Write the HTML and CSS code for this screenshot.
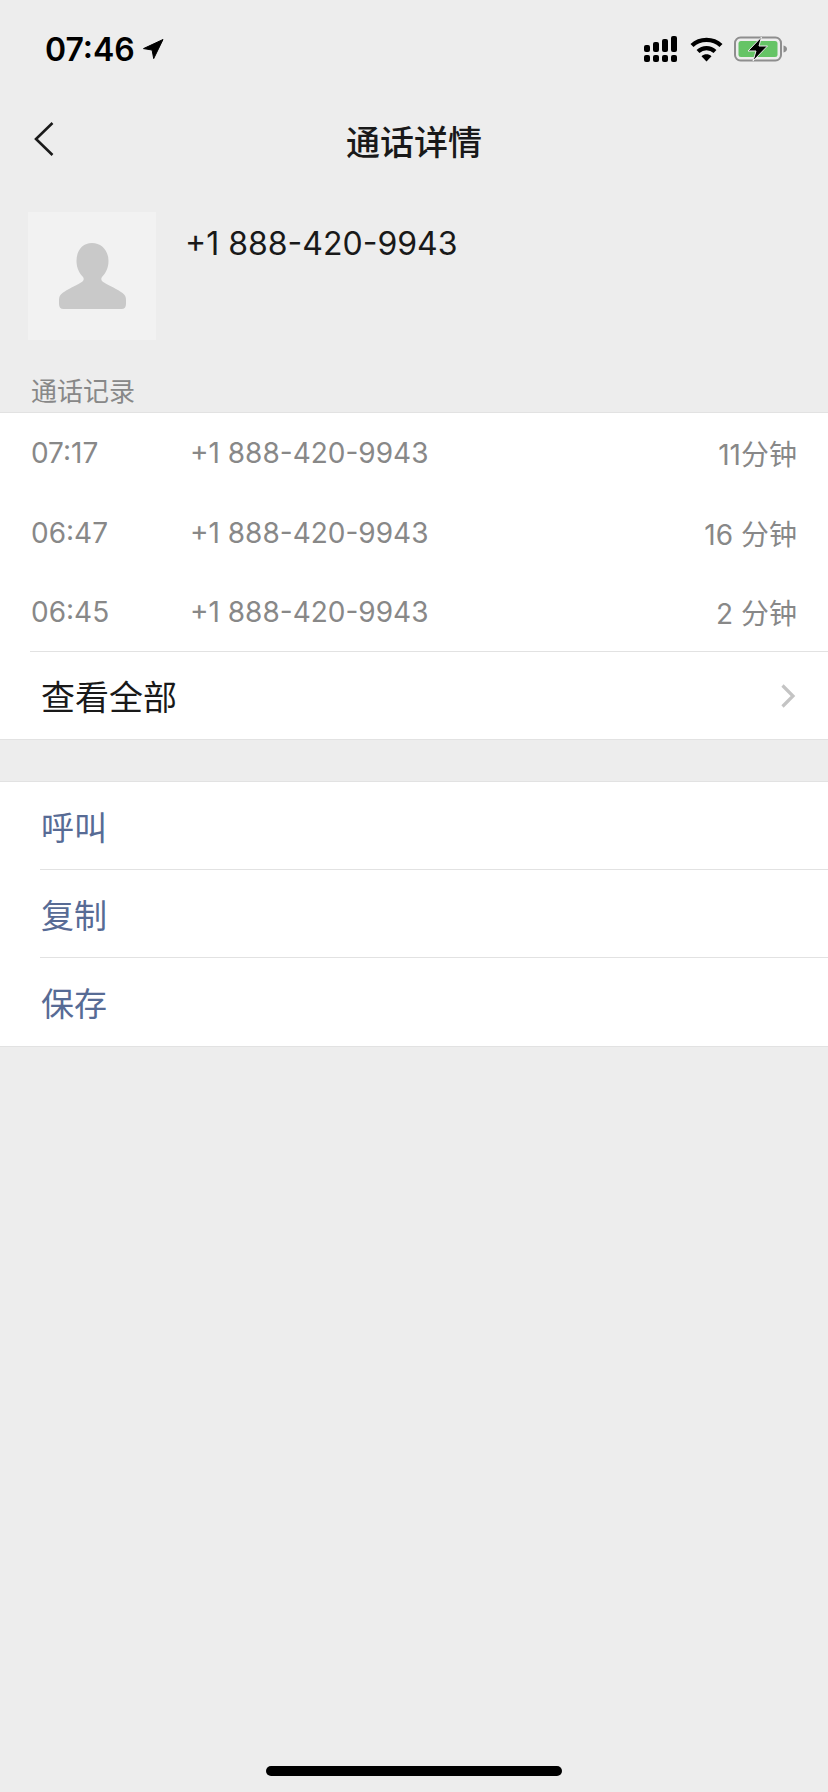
FILE: index.html
```html
<!DOCTYPE html>
<html lang="zh-CN">
<head>
    <meta charset="UTF-8">
    <meta name="viewport" content="width=device-width, initial-scale=1.0">
    <title>通话详情</title>
    <link rel="stylesheet" href="styles.css">
</head>
<body>
    <div class="screen">
        <!-- Status bar -->
        <div class="status-bar">
            <div class="status-left">
                <span class="clock">07:46</span>
                <svg class="location" width="22" height="22" viewBox="0 0 22 22"><path d="M21 1.5 1.5 10.6l8.6 1.4 1.6 8.6z" fill="#000" stroke="#000" stroke-width="1" stroke-linejoin="round"/></svg>
            </div>
            <div class="status-right">
                <svg width="36" height="26" viewBox="0 0 36 26">
                    <g fill="#000">
                        <rect x="1" y="9" width="6" height="7" rx="2"/><rect x="10" y="6" width="6" height="10" rx="2"/><rect x="19" y="3" width="6" height="13" rx="2"/><rect x="28" y="0" width="6" height="16" rx="2"/>
                        <rect x="1" y="19" width="6" height="7" rx="2"/><rect x="10" y="19" width="6" height="7" rx="2"/><rect x="19" y="19" width="6" height="7" rx="2"/><rect x="28" y="19" width="6" height="7" rx="2"/>
                    </g>
                </svg>
                <svg class="wifi" width="33" height="25" viewBox="0 0 33 25">
                    <path d="M2 8.5C10 1 23 1 31 8.5" fill="none" stroke="#000" stroke-width="4.4"/>
                    <path d="M8 14.5c5-4.6 12-4.6 17 0" fill="none" stroke="#000" stroke-width="4.2"/>
                    <path d="M11.5 19.2c3-2.6 7-2.6 10 0l-5 5.3z" fill="#000"/>
                </svg>
                <svg class="battery" width="54" height="26" viewBox="0 0 54 26">
                    <rect x="1" y="1.5" width="46" height="23" rx="5.5" fill="none" stroke="#8e8e8e" stroke-width="2"/>
                    <rect x="4.5" y="5" width="39" height="16" rx="2.5" fill="#65c466"/>
                    <path d="M49.500 9.500c2 .5 3.500 1.800 3.500 3.500s-1.500 3-3.500 3.500z" fill="#8e8e8e"/>
                    <path d="M27.500 1 14 15h8l-3 10 14.500-15h-8.500z" fill="#000" stroke="#ededed" stroke-width="1"/>
                </svg>
            </div>
        </div>

        <!-- Nav -->
        <div class="nav">
            <svg class="back" width="22" height="36" viewBox="0 0 22 36"><path d="M19.500 2 3 18l16.500 16" fill="none" stroke="#1a1a1a" stroke-width="2.600"/></svg>
            <h1>通话详情</h1>
        </div>

        <!-- Contact -->
        <div class="contact">
            <div class="avatar">
                <svg width="68" height="66" viewBox="0 0 68 66">
                    <path d="M34 0c9.500 0 16.500 7.500 16.500 18 0 7-3 12.500-6.500 16-1.500 2-.5 4 2 5.500 5 3 14 7 18.500 10.500 2.500 2 3.500 3.500 3.500 7v4c0 3-1.500 5-4.500 5H5.500C2.500 66 1 64 1 61v-4c0-3.500 1-5 3.500-7C9 46.500 18 42.500 23 39.500c2.500-1.500 3.500-3.500 2-5.500-3.500-3.500-6.500-9-6.500-16C18.500 7.500 24.500 0 34 0z" fill="#c9c9c9"/>
                </svg>
            </div>
            <div class="contact-phone">+1 888-420-9943</div>
        </div>

        <div class="section-label">通话记录</div>

        <!-- Call log -->
        <div class="group">
            <div class="log-rows">
                <div class="log-row"><span class="log-time">07:17</span><span class="log-phone">+1 888-420-9943</span><span class="log-len">11分钟</span></div>
                <div class="log-row"><span class="log-time">06:47</span><span class="log-phone">+1 888-420-9943</span><span class="log-len">16 分钟</span></div>
                <div class="log-row"><span class="log-time">06:45</span><span class="log-phone">+1 888-420-9943</span><span class="log-len">2 分钟</span></div>
            </div>
            <div class="view-all">
                <span>查看全部</span>
                <svg width="16" height="26" viewBox="0 0 16 26"><path d="M2.500 2.500 13 13 2.500 23.500" fill="none" stroke="#c4c4c4" stroke-width="3.200"/></svg>
            </div>
        </div>

        <!-- Actions -->
        <div class="group actions">
            <div class="action">呼叫</div>
            <div class="action">复制</div>
            <div class="action">保存</div>
        </div>

        <div class="home-indicator"></div>
    </div>
</body>
</html>
```

FILE: styles.css
```css
/* General body styles */
* {
    box-sizing: border-box;
}

body {
    margin: 0;
    background: #ededed;
    color: #191919;
    font-family: Inter, "Noto Sans CJK SC", sans-serif;
}

.screen {
    display: flex;
    flex-direction: column;
    width: 828px;
    height: 1792px;
    overflow: hidden;
}

/* Status bar */
.status-bar {
    display: flex;
    justify-content: space-between;
    align-items: center;
    height: 98px;
    padding: 0 40px 0 45px;
}

.status-left {
    display: flex;
    align-items: center;
    gap: 7px;
}

.clock {
    color: #000;
    font-size: 32px;
    font-weight: 600;
}

.status-right {
    display: flex;
    align-items: center;
    gap: 11px;
}

/* Nav */
.nav {
    position: relative;
    display: flex;
    justify-content: center;
    align-items: center;
    height: 84px;
}

.nav h1 {
    margin: 0;
    font-size: 34px;
    font-weight: 500;
}

.back {
    position: absolute;
    left: 33px;
    top: 23px;
}

/* Contact */
.contact {
    display: flex;
    gap: 29px;
    padding: 30px 28px 0;
}

.avatar {
    display: flex;
    justify-content: center;
    align-items: center;
    width: 128px;
    height: 128px;
    background: #f2f2f2;
}

.contact-phone {
    margin-top: 11px;
    font-size: 32px;
    line-height: 42px;
}

.section-label {
    height: 72px;
    padding: 34px 0 0 31px;
    color: #888;
    font-size: 26px;
    line-height: 36px;
}

/* Groups */
.group {
    background: #fff;
    border-top: 1px solid #e2e2e2;
    border-bottom: 1px solid #e2e2e2;
}

.log-rows {
    padding-top: 0;
}

.log-row {
    display: flex;
    align-items: center;
    height: 80px;
    padding: 0 31px;
    color: #888;
    font-size: 28px;
}

.log-row:last-child {
    height: 78px;
}

.log-time {
    width: 159px;
}

.log-len {
    margin-left: auto;
}

.view-all {
    display: flex;
    justify-content: space-between;
    align-items: center;
    height: 88px;
    margin-left: 30px;
    padding: 0 32px 0 11px;
    border-top: 1px solid #e2e2e2;
    font-size: 34px;
}

.actions {
    margin-top: 41px;
}

.action {
    display: flex;
    align-items: center;
    height: 88px;
    margin-left: 40px;
    padding-left: 1px;
    color: #576b95;
    font-size: 33px;
    border-bottom: 1px solid #e2e2e2;
}

.action:last-child {
    border-bottom: none;
}

/* Home indicator */
.home-indicator {
    width: 296px;
    height: 10px;
    margin: auto auto 16px;
    background: #000;
    border-radius: 5px;
}
```
